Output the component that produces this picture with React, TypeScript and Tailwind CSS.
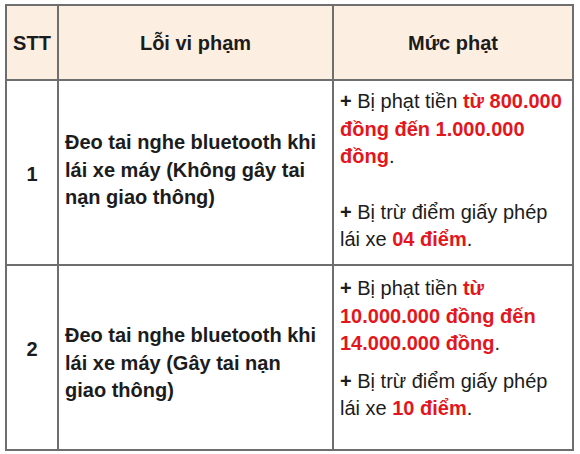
import React from 'react';

const Red = ({ children }: { children: React.ReactNode }) => (
  <span className="font-bold text-[#e3161e]">{children}</span>
);

const App = () => {
  return (
    <div className="w-[580px] h-[454px] bg-white font-['Liberation_Sans',Arial,sans-serif] text-[#1c1c1c]">
      <div className="ml-[5px] pt-[4px]">
        <div className="w-[569px] border-2 border-[#6e6e6e]">
          <div className="grid grid-cols-[52px_275px_238px] grid-rows-[75px_185px_183px]">
            {/* header */}
            <div className="flex items-center justify-center border-r-2 border-b-2 border-[#6e6e6e] bg-[#fcefe2] text-[20px] font-bold">
              STT
            </div>
            <div className="flex items-center justify-center border-r-2 border-b-2 border-[#6e6e6e] bg-[#fcefe2] text-[20px] font-bold">
              Lỗi vi phạm
            </div>
            <div className="flex items-center justify-center border-b-2 border-[#6e6e6e] bg-[#fcefe2] text-[20px] font-bold">
              Mức phạt
            </div>

            {/* row 1 */}
            <div className="flex items-center justify-center border-r-2 border-b-2 border-[#6e6e6e] pt-[2px] text-[20px] font-bold">
              1
            </div>
            <div className="border-r-2 border-b-2 border-[#6e6e6e] pl-[6px] pt-[48px] text-[20px] font-bold leading-[27.5px] whitespace-nowrap">
              Đeo tai nghe bluetooth khi
              <br />
              lái xe máy (Không gây tai
              <br />
              nạn giao thông)
            </div>
            <div className="border-b-2 border-[#6e6e6e] pl-[6px] pt-[7px] text-[20px] leading-[27.5px] whitespace-nowrap">
              <p>
                <span className="font-bold">+</span> Bị phạt tiền <Red>từ 800.000</Red>
                <br />
                <Red>đồng đến 1.000.000</Red>
                <br />
                <Red>đồng</Red>.
              </p>
              <p className="mt-[28px]">
                <span className="font-bold">+</span> Bị trừ điểm giấy phép
                <br />
                lái xe <Red>04 điểm</Red>.
              </p>
            </div>

            {/* row 2 */}
            <div className="border-r-2 border-[#6e6e6e] pt-[70px] text-center text-[20px] font-bold leading-[27.5px]">
              2
            </div>
            <div className="border-r-2 border-[#6e6e6e] pl-[6px] pt-[56px] text-[20px] font-bold leading-[27.5px] whitespace-nowrap">
              Đeo tai nghe bluetooth khi
              <br />
              lái xe máy (Gây tai nạn
              <br />
              giao thông)
            </div>
            <div className="pl-[6px] pt-[9px] text-[20px] leading-[27.5px] whitespace-nowrap">
              <p>
                <span className="font-bold">+</span> Bị phạt tiền <Red>từ</Red>
                <br />
                <Red>10.000.000 đồng đến</Red>
                <br />
                <Red>14.000.000 đồng</Red>.
              </p>
              <p className="mt-[10px]">
                <span className="font-bold">+</span> Bị trừ điểm giấy phép
                <br />
                lái xe <Red>10 điểm</Red>.
              </p>
            </div>
          </div>
        </div>
      </div>
    </div>
  );
};

export default App;
